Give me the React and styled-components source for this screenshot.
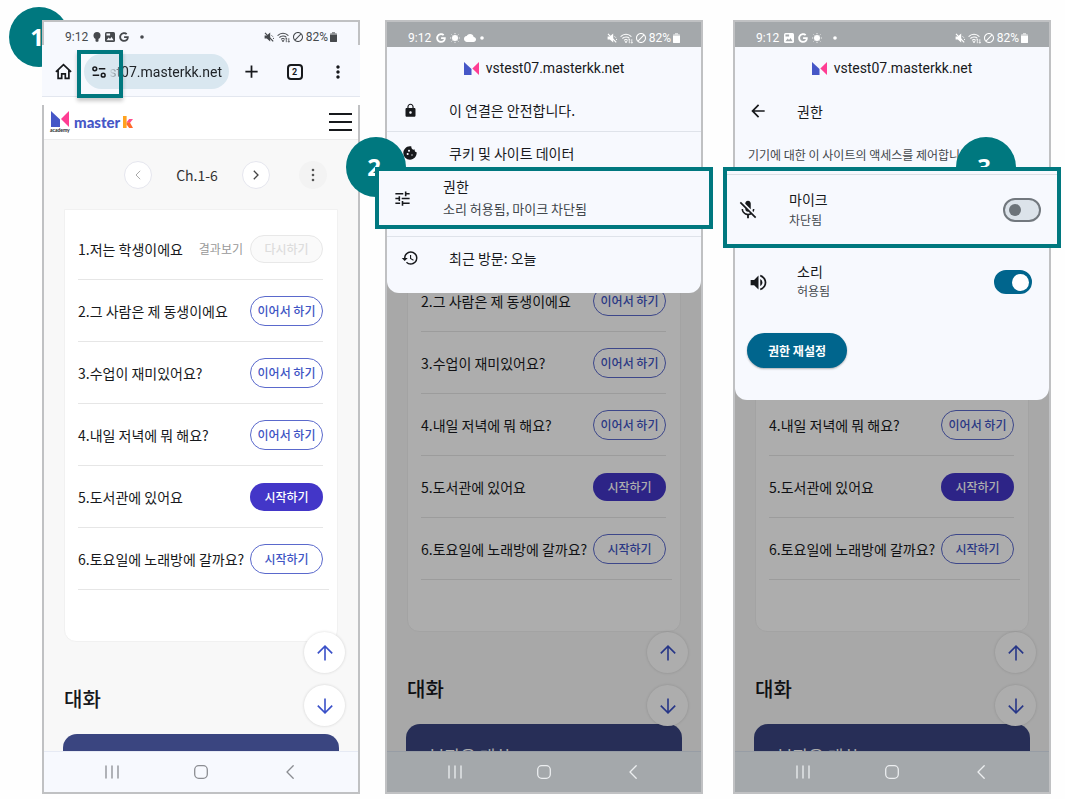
import React from "react";
import styled, { createGlobalStyle, css } from "styled-components";
import {
  MdAdd, MdArrowBack, MdBlock, MdCloud, MdCookie, MdHistory, MdLock,
  MdMicOff, MdMoreVert, MdTune, MdVolumeUp,
} from "react-icons/md";
import { FaGoogle } from "react-icons/fa";

const teal = "#00787f";
const blue = "#4055c4";
const surface = "#f7f9fe";
const korean = '"Noto Sans CJK KR", "Noto Sans", sans-serif';
const latin = 'Roboto, "Noto Sans CJK KR", sans-serif';

const GlobalStyle = createGlobalStyle`
  *, *::before, *::after { box-sizing: border-box; }
  body { margin: 0; background: #fefefe; font-family: ${korean}; color: #17191c; }
  button, input { font: inherit; color: inherit; }
  button { padding: 0; border: 0; background: none; }
  svg { display: block; flex: none; }
  h2, p, ul { margin: 0; padding: 0; }
`;

const Guide = styled.main`
  display: flex;
  padding: 20px 14px 4px 42px;
`;

const Step = styled.section`
  position: relative;
  isolation: isolate;
  flex: 1 1 0;
  min-width: 0;
  display: flex;
  margin-left: ${(p) => p.$gap || 0}px;
`;

/* A badge sits behind the phone or over it, but always under the highlighted row. */
const Badge = styled.span`
  position: absolute;
  left: ${(p) => p.$x}px;
  top: ${(p) => p.$y}px;
  z-index: ${(p) => (p.$behind ? -1 : 2)};
  width: 60px;
  height: 60px;
  padding-right: 4px;
  border-radius: 50%;
  background: ${teal};
  color: #fff;
  font: 700 24px/60px "Open Sans", sans-serif;
  text-align: center;
`;

const Phone = styled.div`
  flex: 1;
  min-width: 0;
  display: flex;
  flex-direction: column;
  border: 2px solid #c0c1c3;
  background: #a9a9a9;
`;

/* ---- system bars ---- */

const StatusRow = styled.div`
  display: flex;
  align-items: center;
  height: ${(p) => (p.$dim ? 25 : 23)}px;
  padding: 7px 21px 0;
  gap: 5px;
  background: ${(p) => (p.$dim ? "#a4a8ab" : surface)};
  color: ${(p) => (p.$dim ? "#fff" : "#46494d")};
  font: 400 12px/14px ${latin};
`;

const StatusSide = styled.span`
  display: flex;
  align-items: center;
  gap: ${(p) => p.$gap}px;
  margin-left: ${(p) => (p.$end ? "auto" : "0")};
`;

const NavBar = styled.nav`
  display: flex;
  align-items: center;
  justify-content: space-around;
  height: 41px;
  padding: 0 24px;
  border-top: 1px solid ${(p) => (p.$dim ? "#979da5" : "#e6eaf4")};
  background: ${(p) => (p.$dim ? "#a4a8ab" : surface)};
  color: ${(p) => (p.$dim ? "#eceef0" : "#8b8d92")};
`;

const Bulb = () => (
  <svg width="8" height="10" viewBox="0 0 8 10" fill="currentColor">
    <circle cx="4" cy="3.5" r="3.5" /><path d="M2.5 6h3v3.2l-1.5.8-1.5-.8z" />
  </svg>
);
const Photo = ({ hole }) => (
  <svg width="10" height="10" viewBox="0 0 10 10">
    <rect width="10" height="10" rx="1.5" fill="currentColor" />
    <path d="M1.5 1.5h3.6v2H1.5zM1.5 8.2l2.2-2.6 1.3 1.4 1.5-2 2.1 3.2z" fill={hole} />
  </svg>
);
const Sunny = () => (
  <svg width="10" height="10" viewBox="0 0 10 10" stroke="currentColor" strokeWidth="1">
    <circle cx="5" cy="5" r="3" fill="currentColor" stroke="none" />
    <path d="M5 .2v1M5 8.8v1M.2 5h1M8.8 5h1M1.6 1.6l.7.7M7.7 7.7l.7.7M8.4 1.6l-.7.7M2.3 7.7l-.7.7" />
  </svg>
);
const Dot = () => (
  <svg width="4" height="4" viewBox="0 0 4 4"><circle cx="2" cy="2" r="1.8" fill="currentColor" /></svg>
);
const Muted = () => (
  <svg width="11" height="10" viewBox="0 0 11 10">
    <path d="M.6 3.4h2.2L6.2.6v8.8L2.8 6.6H.6z" fill="currentColor" />
    <path d="M1 .8l8.2 8.6" stroke="currentColor" strokeWidth="1.2" />
    <path d="M7.6 3.4l1.2 1.2M9 6.4h1" stroke="currentColor" strokeWidth="1" />
  </svg>
);
const Wifi = () => (
  <svg width="13" height="11" viewBox="0 0 13 11" fill="none" stroke="currentColor" strokeWidth="1.1">
    <path d="M.6 3.6C3.7.4 8.3.4 11.4 3.6M2.4 5.5C4.5 3.5 7.6 3.5 9.4 5.3M4.1 7.3c1.1-1 2.6-1 3.5 0" />
    <path d="M5 8.6h2L6 9.9zM9.3 6.2v4M8.3 7.2l1-1 1 1M11.8 6.2v4M10.9 9.2l.9 1 .9-1" strokeWidth=".8" />
  </svg>
);
const Battery = () => (
  <svg width="7" height="10" viewBox="0 0 7 10" fill="currentColor">
    <path d="M2 0h3v1.2h1.2c.5 0 .8.3.8.8v7.2c0 .5-.3.8-.8.8H.8c-.5 0-.8-.3-.8-.8V2c0-.5.3-.8.8-.8H2z" opacity=".6" />
    <path d="M0 3h7v6.2c0 .5-.3.8-.8.8H.8c-.5 0-.8-.3-.8-.8z" />
  </svg>
);

function Status({ dim, children }) {
  return (
    <StatusRow $dim={dim}>
      9:12
      <StatusSide $gap={4}>{children}</StatusSide>
      <StatusSide $gap={2} $end>
        <Muted />
        <Wifi />
        <MdBlock size={12} />
        82%
        <Battery />
      </StatusSide>
    </StatusRow>
  );
}

const NavButton = styled.button`
  display: grid;
  place-items: center;
  width: 32px;
  height: 32px;
`;

function SystemNav({ dim }) {
  const line = { fill: "none", stroke: "currentColor", strokeWidth: 1.3, strokeLinecap: "round", strokeLinejoin: "round" };
  return (
    <NavBar $dim={dim}>
      <NavButton aria-label="최근 앱">
        <svg width="14" height="14" viewBox="0 0 14 14" {...line}><path d="M1 1v12M7 1v12M13 1v12" /></svg>
      </NavButton>
      <NavButton aria-label="홈">
        <svg width="14" height="14" viewBox="0 0 14 14" {...line}><rect x=".7" y=".7" width="12.6" height="12.6" rx="4" /></svg>
      </NavButton>
      <NavButton aria-label="뒤로">
        <svg width="8" height="14" viewBox="0 0 8 14" {...line}><path d="M7.2.8 1 7l6.2 6.2" /></svg>
      </NavButton>
    </NavBar>
  );
}

/* ---- browser ---- */

const BrowserBar = styled.div`
  position: relative;
  display: flex;
  align-items: center;
  height: 52px;
  margin: 0 -2px;
  padding: 2px 1px 0 13px;
  border-bottom: 1px solid #e3e7ef;
  background: ${surface};
`;

const BarGap = styled.div`
  height: 8px;
  margin: 0 -2px;
  background: #fff;
`;

const Address = styled.div`
  display: flex;
  align-items: center;
  flex: 1;
  min-width: 0;
  height: 35px;
  margin: 0 1px 0 12px;
  padding: 0 7px;
  border-radius: 18px;
  background: #d9e7f0;
`;

const UrlInput = styled.input`
  flex: 1;
  min-width: 0;
  padding: 0;
  border: 0;
  outline: 0;
  background: none;
  font: 400 14px/20px ${latin};
  text-align: right;
  color: #202428;
  -webkit-mask-image: linear-gradient(90deg, transparent 2px, #000 18px);
  mask-image: linear-gradient(90deg, transparent 2px, #000 18px);
`;

const BarButton = styled.button`
  display: grid;
  place-items: center;
  width: ${(p) => p.$w || 43}px;
  height: 32px;
`;

const TabCount = styled.span`
  width: 16px;
  height: 16px;
  border: 2px solid #17191c;
  border-radius: 4px;
  font: 700 9px/12px ${latin};
  text-align: center;
`;

const Spotlight = styled.span`
  position: absolute;
  left: 35px;
  top: 5px;
  width: 46px;
  height: 48px;
  border: 4px solid ${teal};
  box-shadow: 0 3px 4px rgba(0, 0, 0, 0.22);
  pointer-events: none;
`;

const SiteHeader = styled.header`
  display: flex;
  align-items: center;
  justify-content: space-between;
  height: 35px;
  padding: 0 6px;
  border-bottom: 1px solid #ececec;
  background: #fff;
`;

const Brand = styled.a`
  display: flex;
  align-items: center;
  gap: 6px;
  height: 28px;
  color: #4657c7;
  font: 900 15px/18px Lato, sans-serif;
  text-decoration: none;
`;

const Crest = styled.span`
  display: grid;
  justify-items: center;
  width: 18px;
  color: #17191c;
  font: 700 5px/6px Lato, sans-serif;
`;

const Wordmark = styled.span`
  display: flex;
  align-items: center;
  gap: 3px;
`;

const Mark = ({ size }) => (
  <svg width={size + 2} height={size} viewBox="0 0 18 16" preserveAspectRatio="none">
    <path d="M0 0 9 8.5V16H0z" fill="#4657c7" />
    <path d="M18 0v16L10 8z" fill="#ff3d93" />
  </svg>
);

/* ---- lesson page ---- */

const Lesson = styled.div`
  position: relative;
  display: flex;
  flex-direction: column;
  padding: 0 20px;
  background: #f8f8f8;
  ${(p) => p.$dim && css`
    flex: 1 0 0px;
    height: 0;
    min-height: 0;
    justify-content: flex-end;
    overflow: hidden;
    &::after {
      content: "";
      position: absolute;
      inset: 0;
      background: rgba(0, 0, 0, 0.32);
    }
  `}
`;

const Chapters = styled.div`
  display: flex;
  align-items: center;
  height: 69px;
  padding-left: 60px;
  font-size: 14px;
  color: #333;
`;

const ChapterName = styled.span`
  width: 90px;
  text-align: center;
`;

const RoundButton = styled.button`
  display: grid;
  place-items: center;
  width: 28px;
  height: 28px;
  border: ${(p) => (p.$plain ? "0" : "1px solid #e5e6ee")};
  border-radius: 50%;
  background: ${(p) => (p.$plain ? "#f3f3f3" : "#fff")};
  color: ${(p) => (p.$faint ? "#aaa" : "#444")};
  margin-left: ${(p) => (p.$plain ? "auto" : "0")};
  margin-right: ${(p) => (p.$plain ? "11px" : "0")};
`;

const Card = styled.ul`
  flex: none;
  padding: 8px 8px 51px 13px;
  border: 1px solid #f1f1f1;
  border-radius: 0 0 12px 12px;
  background: #fff;
  list-style: none;
`;

const Item = styled.li`
  display: flex;
  align-items: center;
  height: 62px;
  margin-right: 6px;
  border-bottom: 1px solid #e6e6e6;
  font-size: 14px;
  white-space: nowrap;
  &:last-child { margin-right: 0; padding-right: 6px; }
`;

const ResultLink = styled.a`
  margin: 0 7px 0 auto;
  font-size: 12px;
  color: #999;
  text-decoration: none;
`;

const tones = {
  outline: css`height: 30px; border: 1px solid #5a69cc; color: ${blue};`,
  filled: css`height: 28px; background: #4336c8; color: #fff;`,
  off: css`height: 28px; border: 1px solid #e8e8e8; background: #fafafa; color: #ddd;`,
};

const Action = styled.button`
  flex: none;
  width: 73px;
  margin-left: ${(p) => (p.$tone === "off" ? "0" : "auto")};
  border-radius: 15px;
  font-size: 12px;
  font-weight: 500;
  line-height: 18px;
  ${(p) => tones[p.$tone]}
`;

const Heading = styled.h2`
  flex: none;
  height: 92px;
  padding-top: 45px;
  font-size: 20px;
  font-weight: 500;
  line-height: 24px;
`;

const Dialogue = styled.div`
  flex: none;
  height: ${(p) => (p.$dim ? 27 : 17)}px;
  margin: 0 -1px;
  padding: ${(p) => (p.$dim ? "20px 23px 0" : "0")};
  border-radius: 14px 14px 0 0;
  background: #3a4580;
  overflow: hidden;
  color: #fff;
  font-size: 17px;
  line-height: 24px;
`;

const Jump = styled.div`
  position: absolute;
  right: 13px;
  bottom: 25px;
  display: grid;
  gap: 12px;
`;

const JumpButton = styled.button`
  display: grid;
  place-items: center;
  width: 41px;
  height: 41px;
  border-radius: 50%;
  background: #fff;
  box-shadow: 0 0 3px rgba(0, 0, 0, 0.16);
  color: #3a50c8;
`;

const lessons = [
  ["1.저는 학생이에요", "다시하기", "off"],
  ["2.그 사람은 제 동생이에요", "이어서 하기", "outline"],
  ["3.수업이 재미있어요?", "이어서 하기", "outline"],
  ["4.내일 저녁에 뭐 해요?", "이어서 하기", "outline"],
  ["5.도서관에 있어요", "시작하기", "filled"],
  ["6.토요일에 노래방에 갈까요?", "시작하기", "outline"],
];

function LessonPage({ dim, from = 0 }) {
  const stroke = { fill: "none", stroke: "currentColor" };
  return (
    <Lesson $dim={dim}>
      {!dim && (
        <Chapters>
          <RoundButton $faint aria-label="이전">
            <svg width="6" height="10" viewBox="0 0 6 10" {...stroke}><path d="M5.2.8 1 5l4.2 4.2" /></svg>
          </RoundButton>
          <ChapterName>Ch.1-6</ChapterName>
          <RoundButton aria-label="다음">
            <svg width="6" height="10" viewBox="0 0 6 10" {...stroke} strokeWidth="1.3"><path d="M.8.8 5 5 .8 9.2" /></svg>
          </RoundButton>
          <RoundButton $plain aria-label="더보기">
            <svg width="4" height="14" viewBox="0 0 4 14" fill="#555">
              <circle cx="2" cy="2" r="1.3" /><circle cx="2" cy="7" r="1.3" /><circle cx="2" cy="12" r="1.3" />
            </svg>
          </RoundButton>
        </Chapters>
      )}
      <Card>
        {lessons.slice(from).map(([title, label, tone]) => (
          <Item key={title}>
            {title}
            {tone === "off" && <ResultLink href="#result">결과보기</ResultLink>}
            <Action $tone={tone}>{label}</Action>
          </Item>
        ))}
      </Card>
      <Heading>대화</Heading>
      <Dialogue $dim={dim}>{dim && "부자은 대화"}</Dialogue>
      <Jump>
        <JumpButton aria-label="위로">
          <svg width="16" height="16" viewBox="0 0 16 16" {...stroke} strokeWidth="1.6"><path d="M8 15.5V1.2M.8 8.4 8 1.2l7.2 7.2" /></svg>
        </JumpButton>
        <JumpButton aria-label="아래로">
          <svg width="16" height="16" viewBox="0 0 16 16" {...stroke} strokeWidth="1.6"><path d="M8 .5v14.3M.8 7.6 8 14.8l7.2-7.2" /></svg>
        </JumpButton>
      </Jump>
    </Lesson>
  );
}

/* ---- site info sheet ---- */

const Sheet = styled.div`
  padding-bottom: ${(p) => p.$bottom}px;
  border-radius: 0 0 12px 12px;
  background: ${surface};
`;

const Domain = styled.div`
  display: flex;
  align-items: center;
  justify-content: center;
  gap: 7px;
  height: 42px;
  font: 400 14px/20px ${latin};
`;

const SheetRow = styled.div`
  display: flex;
  align-items: center;
  gap: 30px;
  height: ${(p) => p.$h}px;
  padding: ${(p) => p.$top || 0}px 17px 0 14px;
  border-bottom: ${(p) => (p.$line ? "1px solid #dfe3ea" : "0")};
  font-size: 14px;
  line-height: 20px;
`;

const HighlightRow = styled.div`
  position: relative;
  z-index: 3;
  display: flex;
  align-items: center;
  gap: 32px;
  height: ${(p) => p.$h}px;
  margin: 0 -12px;
  padding: 0 16px 0 14px;
  border: 4px solid ${teal};
  background: ${surface};
  font-size: 14px;
  line-height: 20px;
  ${(p) => p.$ruled && css`
    padding: 5px 16px 0 12px;
    &::before {
      content: "";
      position: absolute;
      inset: 3px 0 auto;
      height: 1px;
      background: #dcdfe5;
    }
  `}
`;

const Glyph = styled.span`
  display: flex;
  flex: none;
  align-items: center;
  justify-content: center;
  width: 18px;
`;

const BackButton = styled(Glyph).attrs({ as: "button" })``;

const Texts = styled.div`
  flex: 1;
  min-width: 0;
  padding-bottom: 2px;
`;

const Sub = styled.p`
  font-size: ${(p) => p.$size || 12}px;
  line-height: 20px;
  margin-top: ${(p) => p.$gap || 0}px;
  color: #42474c;
`;

const Note = styled.p`
  height: 35px;
  padding: 13px 13px 0;
  overflow: hidden;
  white-space: nowrap;
  font-size: 12px;
  line-height: 20px;
  color: #42474c;
`;

const Spacer = styled.div`
  height: 8px;
  border-bottom: 1px solid #dfe3ea;
`;

const Switch = styled.input`
  appearance: none;
  display: flex;
  align-items: center;
  width: 38px;
  height: 24px;
  margin: 0;
  padding: 0 4px;
  border: 2px solid #72787e;
  border-radius: 12px;
  background: #dce3ea;
  &::before {
    content: "";
    width: 12px;
    height: 12px;
    border-radius: 50%;
    background: #6d747a;
  }
  &:checked {
    justify-content: flex-end;
    padding: 0 1px;
    border-color: #00658d;
    background: #00658d;
  }
  &:checked::before {
    width: 17px;
    height: 17px;
    background: #fff;
  }
`;

const ResetButton = styled.button`
  display: block;
  width: 100px;
  height: 35px;
  margin: 17px 0 0 12px;
  border-radius: 18px;
  background: #00658d;
  box-shadow: 0 1px 2px rgba(0, 0, 0, 0.3);
  color: #fff;
  font-size: 12px;
  font-weight: 700;
`;

const MenuButton = styled.button`
  display: block;
`;

function SiteDomain() {
  return <Domain><Mark size={13} />vstest07.masterkk.net</Domain>;
}

function InfoSheet() {
  return (
    <Sheet $bottom={14}>
      <SiteDomain />
      <SheetRow $h={43} $line><Glyph><MdLock size={15} /></Glyph>이 연결은 안전합니다.</SheetRow>
      <SheetRow $h={35} $top={6}><Glyph><MdCookie size={16} /></Glyph>쿠키 및 사이트 데이터</SheetRow>
      <HighlightRow $h={62}>
        <Glyph><MdTune size={19} /></Glyph>
        <Texts>권한<Sub $size={13} $gap={3}>소리 허용됨, 마이크 차단됨</Sub></Texts>
      </HighlightRow>
      <Spacer />
      <SheetRow $h={42}><Glyph><MdHistory size={18} /></Glyph>최근 방문: 오늘</SheetRow>
    </Sheet>
  );
}

function PermissionSheet() {
  return (
    <Sheet $bottom={32}>
      <SiteDomain />
      <SheetRow $h={43}>
        <BackButton aria-label="뒤로"><MdArrowBack size={20} /></BackButton>
        권한
      </SheetRow>
      <Note>기기에 대한 이 사이트의 액세스를 제어합니다.</Note>
      <HighlightRow $h={81} $ruled>
        <Glyph><MdMicOff size={22} /></Glyph>
        <Texts><label htmlFor="mic">마이크</label><Sub $gap={1}>차단됨</Sub></Texts>
        <Switch id="mic" type="checkbox" role="switch" />
      </HighlightRow>
      <SheetRow $h={68}>
        <Glyph><MdVolumeUp size={21} /></Glyph>
        <Texts><label htmlFor="sound">소리</label><Sub>허용됨</Sub></Texts>
        <Switch id="sound" type="checkbox" role="switch" defaultChecked />
      </SheetRow>
      <ResetButton>권한 재설정</ResetButton>
    </Sheet>
  );
}

export default function App() {
  return (
    <>
      <GlobalStyle />
      <Guide>
        <Step>
          <Badge $x={-33} $y={-13} $behind>1</Badge>
          <Phone>
            <Status>
              <Bulb /><Photo hole={surface} /><FaGoogle size={10} />
              &nbsp;<Dot />
            </Status>
            <BrowserBar>
              <BarButton $w={17} aria-label="홈">
                <svg width="17" height="17" viewBox="0 0 17 17" fill="none" stroke="currentColor" strokeWidth="1.7">
                  <path d="M.9 8.8 8.5 1.6l7.6 7.2M3.1 7.2v8.2h3.6v-4.6h3.6v4.6h3.6V7.2" />
                </svg>
              </BarButton>
              <Address>
                <BarButton $w={16} aria-label="사이트 정보">
                  <svg width="14" height="12" viewBox="0 0 14 12" fill="none" stroke="currentColor" strokeWidth="1.5">
                    <circle cx="2.8" cy="2.8" r="1.9" /><path d="M6.8 2.8h6.5M.7 9.2h6.5" /><circle cx="11.2" cy="9.2" r="1.9" />
                  </svg>
                </BarButton>
                <UrlInput aria-label="주소" defaultValue="st07.masterkk.net" />
              </Address>
              <BarButton aria-label="새 탭"><MdAdd size={21} /></BarButton>
              <BarButton aria-label="탭"><TabCount>2</TabCount></BarButton>
              <BarButton aria-label="메뉴"><MdMoreVert size={20} /></BarButton>
              <Spotlight />
            </BrowserBar>
            <BarGap />
            <SiteHeader>
              <Brand href="#home">
                <Crest><Mark size={16} />academy</Crest>
                <Wordmark>
                  master
                  <svg width="10" height="12" viewBox="0 0 10 12">
                    <path d="M0 0h3.6v12H0z" fill="#ffa21f" />
                    <path d="M3.6 6.2 6.2 3H10L6.9 7z" fill="#ff4f8b" />
                    <path d="M3.6 6.2 6.9 6.6 10 12H6.2L3.6 8.6z" fill="#ff6a2a" />
                  </svg>
                </Wordmark>
              </Brand>
              <MenuButton aria-label="전체 메뉴">
                <svg width="23" height="18" viewBox="0 0 23 18" stroke="#17191c" strokeWidth="2"><path d="M0 1h23M0 9h23M0 17h23" /></svg>
              </MenuButton>
            </SiteHeader>
            <LessonPage />
            <SystemNav />
          </Phone>
        </Step>

        <Step $gap={25}>
          <Badge $x={-39} $y={117}>2</Badge>
          <Phone>
            <Status dim>
              <FaGoogle size={10} /><Sunny /><MdCloud size={12} />
              <Dot />
            </Status>
            <InfoSheet />
            <LessonPage dim from={1} />
            <SystemNav dim />
          </Phone>
        </Step>

        <Step $gap={30}>
          <Badge $x={223} $y={117}>3</Badge>
          <Phone>
            <Status dim>
              <Photo hole="#a4a8ab" /><FaGoogle size={10} /><Sunny />
              &nbsp;<Dot />
            </Status>
            <PermissionSheet />
            <LessonPage dim from={3} />
            <SystemNav dim />
          </Phone>
        </Step>
      </Guide>
    </>
  );
}
